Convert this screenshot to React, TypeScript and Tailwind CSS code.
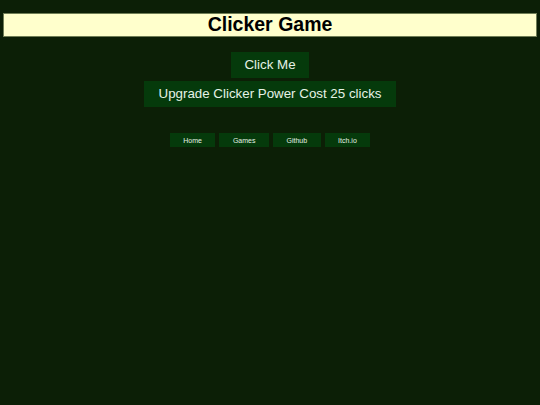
export default function App() {
  const links = ["Home", "Games", "Github", "Itch.io"]

  return (
    <div className="min-h-[405px] w-full bg-[#0c1f06] pt-[13px] px-[3px] font-['Liberation_Sans',Arial,sans-serif]">
      {/* Title bar */}
      <div className="flex h-[24px] items-center justify-center border border-[#6f7d55] bg-[#ffffcc]">
        <h1 className="text-[19.5px] font-bold leading-none text-black">Clicker Game</h1>
      </div>

      {/* Game buttons */}
      <div className="mt-[15px] flex flex-col items-center gap-[3px]">
        <button className="h-[26px] bg-[#053a0b] px-[13px] text-[13.333px] text-[#e6f2e6]">
          Click Me
        </button>
        <button className="h-[26px] bg-[#053a0b] px-[14.5px] text-[13.333px] text-[#e6f2e6]">
          Upgrade Clicker Power Cost 25 clicks
        </button>
      </div>

      {/* Nav */}
      <nav className="mt-[26px] flex justify-center gap-[4px]">
        {links.map((l) => (
          <button
            key={l}
            className="h-[14px] bg-[#053a0b] px-[13.5px] text-[7px] leading-none text-[#e6f2e6]"
          >
            {l}
          </button>
        ))}
      </nav>
    </div>
  )
}
